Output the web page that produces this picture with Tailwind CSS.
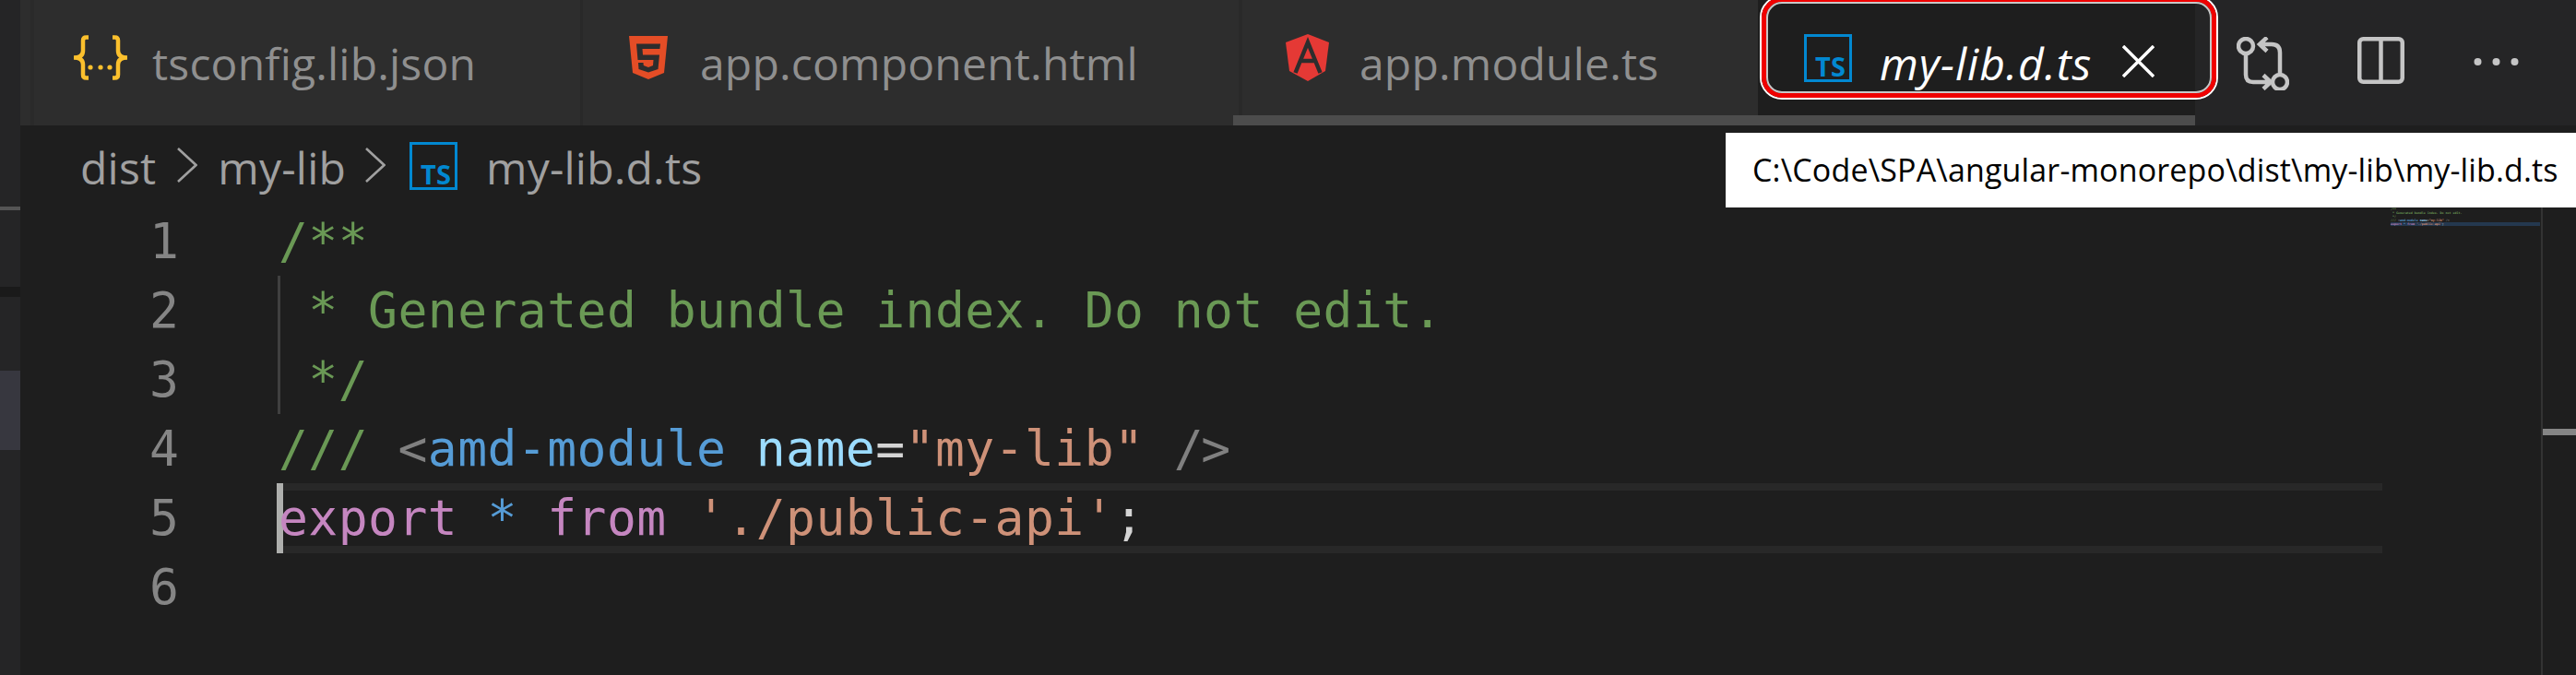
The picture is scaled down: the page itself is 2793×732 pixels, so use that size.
<!doctype html>
<html>
<head>
<meta charset="utf-8">
<script src="https://cdn.jsdelivr.net/npm/@tailwindcss/browser@4"></script>
</head>
<body class="m-0 overflow-hidden bg-[#1e1e1e]">
<div class="relative flex w-[2793px] h-[732px] overflow-hidden bg-[#1e1e1e] font-['Open_Sans','Noto_Sans',sans-serif]">
  <!-- left strip -->
  <div class="w-[22px] h-full shrink-0 flex flex-col bg-[#252526]">
    <div class="h-[224px] shrink-0"></div>
    <div class="h-[4px] shrink-0 bg-[#555555]"></div>
    <div class="h-[83px] shrink-0"></div>
    <div class="h-[11px] shrink-0 bg-[#1a1a1a]"></div>
    <div class="h-[80px] shrink-0"></div>
    <div class="h-[86px] shrink-0 bg-[#37373f]"></div>
  </div>

  <div class="flex-1 min-w-0 flex flex-col">
    <!-- tab bar -->
    <div class="flex h-[136px] shrink-0 bg-[#252526] text-[48px] leading-[60px] tracking-[0.2px] text-[#8f8f8f] whitespace-nowrap">
      <div class="w-[15px] bg-[#2d2d2d] border-r-[4px] border-[#2a2a2a]"></div>
      <div class="flex items-start w-[595px] pl-[40px] bg-[#2d2d2d] border-r-[3px] border-[#292929]">
        <svg class="w-[64px] h-[49px] mt-[38px] shrink-0" viewBox="0 0 64 49" fill="none" stroke="#fbc02d" stroke-width="4.5">
          <path d="M19 2.5H16.5Q13 2.5 13 6V17Q13 24.5 3 24.5Q13 24.5 13 32V43Q13 46.5 16.5 46.5H19"/>
          <path d="M45 2.5H47.5Q51 2.5 51 6V17Q51 24.5 61 24.5Q51 24.5 51 32V43Q51 46.5 47.5 46.5H45"/>
          <g fill="#fbc02d" stroke="none"><circle cx="21" cy="35" r="2.6"/><circle cx="32" cy="35" r="2.6"/><circle cx="42" cy="35" r="2.6"/></g>
        </svg>
        <span class="ml-[24px] mt-[39px]">tsconfig.lib.json</span>
      </div>
      <div class="flex items-start w-[715px] pl-[50px] bg-[#2d2d2d] border-r-[4px] border-[#292929]">
        <svg class="w-[42px] h-[47px] mt-[39px] shrink-0" viewBox="0 0 42 47">
          <path fill="#e44d26" d="M0 0H42L38 40L21 47L4 40Z"/>
          <path fill="#2d2d2d" d="M8 8.5H34L33.4 14H14.5L15 20.5H33L31.5 36L21 39.5L10.5 36L10 29H15.5L15.8 32L21 34L26 32L26.5 26H9.5Z"/>
        </svg>
        <span class="ml-[35px] mt-[39px]">app.component.html</span>
      </div>
      <div class="flex items-start w-[559px] pl-[47px] bg-[#2d2d2d]">
        <svg class="w-[47px] h-[51px] mt-[37px] shrink-0" viewBox="0 0 47 51">
          <path fill="#e53935" d="M24 0L47 9L43 40L24 51L4 40L0 9Z"/>
          <path fill="none" stroke="#2d2d2d" stroke-width="4.5" d="M10.5 42L24 9L37.5 42M16 29H32"/>
        </svg>
        <span class="ml-[33px] mt-[39px]">app.module.ts</span>
      </div>
      <div class="flex items-start w-[474px] pl-[50px] bg-[#1e1e1e] text-white">
        <svg class="w-[52px] h-[52px] mt-[37px] shrink-0" viewBox="0 0 52 52">
          <rect x="1.5" y="1.5" width="49" height="49" fill="none" stroke="#0288d1" stroke-width="3"/>
          <text x="12" y="46" font-size="29" font-weight="700" fill="#0288d1" font-family="Open Sans">TS</text>
        </svg>
        <span class="ml-[30px] mt-[39px] italic tracking-[1px]">my-lib.d.ts</span>
        <svg class="w-[35px] h-[35px] ml-[33px] mt-[49px] shrink-0" viewBox="0 0 35 35" stroke="#ffffff" stroke-width="3.5" fill="none"><path d="M1 1L34 34M34 1L1 34"/></svg>
      </div>
      <div class="flex items-start pl-[45px] gap-[74px]">
        <svg class="w-[57px] h-[58px] mt-[40px] shrink-0" viewBox="0 0 57 58" fill="none" stroke="#c5c5c5" stroke-width="4.5">
          <circle cx="10" cy="10" r="8"/>
          <circle cx="47" cy="49" r="8"/>
          <path d="M47 41V17Q47 8 38 8H25M33 0.5L25 8L33 15.5"/>
          <path d="M10 18V41Q10 49 18 49H37M29 41.5L37 49L29 56.5"/>
        </svg>
        <svg class="w-[51px] h-[51px] mt-[40px] shrink-0" viewBox="0 0 51 51" fill="none" stroke="#c5c5c5" stroke-width="4.5">
          <rect x="2.25" y="2.25" width="46.5" height="46.5" rx="4"/><path d="M25.5 2V49"/>
        </svg>
        <svg class="w-[49px] h-[10px] mt-[62px] ml-[1px] shrink-0" viewBox="0 0 49 10" fill="#c5c5c5">
          <circle cx="4.5" cy="5" r="4"/><circle cx="24.5" cy="5" r="4"/><circle cx="44.5" cy="5" r="4"/>
        </svg>
      </div>
    </div>

    <!-- breadcrumb -->
    <div class="flex items-start h-[88px] shrink-0 pl-[65px] pt-[16px] text-[48px] leading-[60px] tracking-[0.2px] text-[#a0a0a0] whitespace-nowrap">
      <span>dist</span>
      <svg class="w-[22px] h-[38px] ml-[23px] mt-[8px] shrink-0" viewBox="0 0 22 38" fill="none" stroke="#a0a0a0" stroke-width="2.6"><path d="M1 1L20.5 19L1 37"/></svg>
      <span class="ml-[22px]">my-lib</span>
      <svg class="w-[22px] h-[38px] ml-[21px] mt-[8px] shrink-0" viewBox="0 0 22 38" fill="none" stroke="#a0a0a0" stroke-width="2.6"><path d="M1 1L20.5 19L1 37"/></svg>
      <svg class="w-[52px] h-[52px] ml-[26px] mt-[2px] shrink-0" viewBox="0 0 52 52">
        <rect x="1.5" y="1.5" width="49" height="49" fill="none" stroke="#0288d1" stroke-width="3"/>
        <text x="12" y="46" font-size="29" font-weight="700" fill="#0288d1" font-family="Open Sans">TS</text>
      </svg>
      <span class="ml-[31px]">my-lib.d.ts</span>
    </div>

    <!-- editor -->
    <div class="flex flex-1 min-h-0 font-['DejaVu_Sans_Mono',monospace] text-[53px] leading-[75px] tracking-[0.45px]">
      <div class="w-[172px] shrink-0 text-right text-[#858585] tracking-normal">
        <div class="h-[75px]">1</div>
        <div class="h-[75px]">2</div>
        <div class="h-[75px]">3</div>
        <div class="h-[75px]">4</div>
        <div class="h-[75px]">5</div>
        <div class="h-[75px]">6</div>
      </div>
      <div class="w-[2281px] ml-[108px] shrink-0 text-[#d4d4d4]">
        <div class="h-[75px] text-[#6a9955] whitespace-pre">/**</div>
        <div class="relative">
          <div class="absolute left-[-1px] top-0 w-[3px] h-[150px] bg-[#404040]"></div>
          <div class="h-[75px] text-[#6a9955] whitespace-pre"> * Generated bundle index. Do not edit.</div>
          <div class="h-[75px] text-[#6a9955] whitespace-pre"> */</div>
        </div>
        <div class="h-[75px] whitespace-pre"><span class="text-[#6a9955]">/// </span><span class="text-[#808080]">&lt;</span><span class="text-[#569cd6]">amd-module</span> <span class="text-[#9cdcfe]">name</span><span class="text-[#d4d4d4]">=</span><span class="text-[#ce9178]">"my-lib"</span> <span class="text-[#808080]">/</span><span class="text-[#808080] -ml-[3px]">&gt;</span></div>
        <div class="relative h-[76px] border-y-[8px] border-[#282828] leading-[59px] whitespace-pre"><div class="absolute left-[-2px] top-[-8px] w-[7px] h-[76px] bg-[#aeafad]"></div><span class="relative text-[#c586c0]">export</span> <span class="text-[#569cd6]">*</span> <span class="text-[#c586c0]">from</span> <span class="text-[#ce9178]">'./public-api'</span><span class="text-[#d4d4d4]">;</span></div>
      </div>
    </div>
  </div>

  <!-- editor-tabs scrollbar -->
  <div class="absolute left-[1337px] top-[125px] w-[1043px] h-[11px] bg-[#4c4c4c]"></div>

  <!-- focus ring of the active tab -->
  <div class="absolute left-[1908px] top-[-5px] w-[497px] h-[113px] rounded-[24px] border-2 border-white">
    <div class="w-full h-full rounded-[22px] border-[5px] border-[#f00000]">
      <div class="w-full h-full rounded-[17px] border-2 border-[#c8c8c8]"></div>
    </div>
  </div>

  <!-- tooltip -->
  <div class="absolute left-[1871px] top-[144px] w-[922px] h-[81px] flex items-center pl-[29px] bg-white text-black text-[34px] tracking-[0.15px] whitespace-nowrap">C:\Code\SPA\angular-monorepo\dist\my-lib\my-lib.d.ts</div>

  <!-- minimap -->
  <div class="absolute left-[2592px] top-[225px] w-[162px] font-['DejaVu_Sans_Mono',monospace] font-bold text-[3.3px] leading-[4px] text-[#6a9955]" aria-hidden="true">
    <div class="h-[4px] whitespace-pre">/**</div>
    <div class="h-[4px] whitespace-pre"> * Generated bundle index. Do not edit.</div>
    <div class="h-[4px] whitespace-pre"> */</div>
    <div class="h-[4px] whitespace-pre">/// <span class="text-[#808080]">&lt;</span><span class="text-[#569cd6]">amd-module</span> <span class="text-[#9cdcfe]">name</span><span class="text-[#d4d4d4]">=</span><span class="text-[#ce9178]">"my-lib"</span> <span class="text-[#808080]">/&gt;</span></div>
    <div class="h-[4px] whitespace-pre bg-[#24384f]"><span class="text-[#c586c0]">export</span> <span class="text-[#569cd6]">*</span> <span class="text-[#c586c0]">from</span> <span class="text-[#ce9178]">'./public-api'</span><span class="text-[#d4d4d4]">;</span></div>
  </div>

  <!-- overview ruler -->
  <div class="absolute left-[2755px] top-[225px] w-[2px] h-[507px] bg-[#333333]"></div>
  <div class="absolute left-[2757px] top-[465px] w-[36px] h-[7px] bg-[#858585]"></div>
</div>
</body>
</html>
